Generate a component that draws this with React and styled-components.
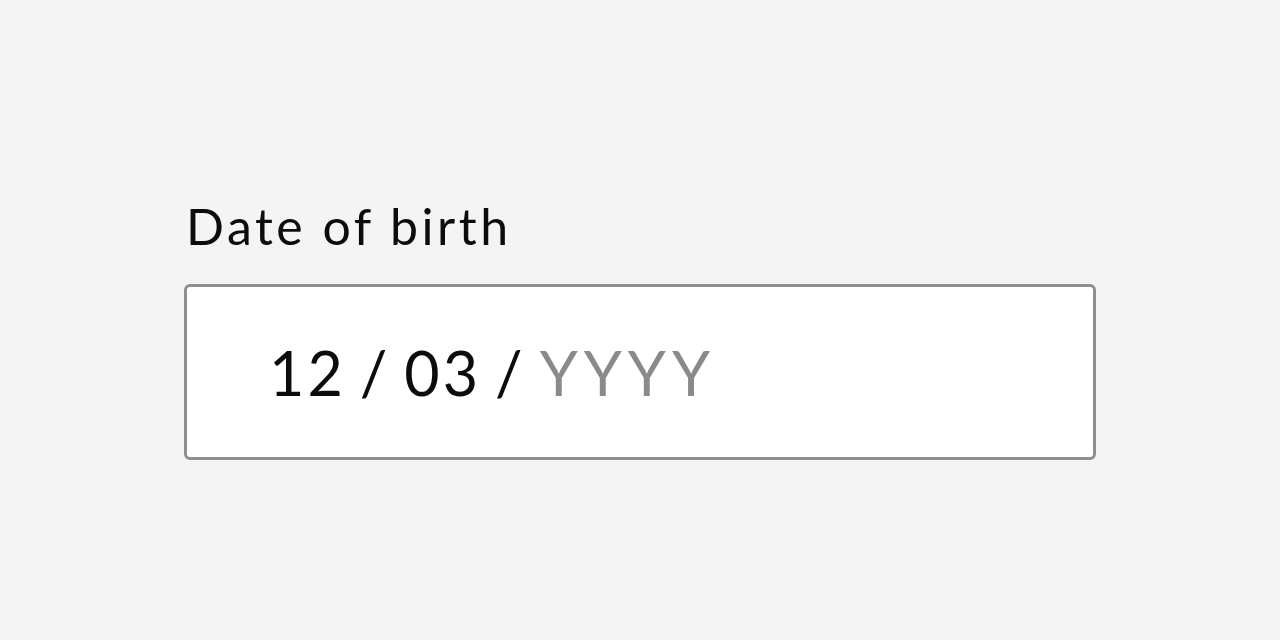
import React from 'react';
import styled, { createGlobalStyle } from 'styled-components';

const GlobalStyle = createGlobalStyle`
    html, body {
        margin: 0;
        padding: 0;
        background: #f4f4f4;
    }
    body {
        font-family: Lato, "Noto Sans", sans-serif;
        color: #0b0c0c;
    }
`;

const Page = styled.div`
    width: 1280px;
    height: 640px;
    box-sizing: border-box;
    padding: 194px 0 0 184px;
`;

const Field = styled.div`
    display: flex;
    flex-direction: column;
    gap: 26px;
    width: 912px;
`;

const Label = styled.label`
    font-size: 50px;
    line-height: 64px;
    letter-spacing: 3.5px;
    padding-left: 2px;
    color: #0b0c0c;
`;

const InputBox = styled.div`
    box-sizing: border-box;
    height: 176px;
    background: #ffffff;
    border: 3px solid #8e8e92;
    border-radius: 6px;
    display: flex;
    align-items: center;
    padding-left: 82px;
    font-size: 61px;
    letter-spacing: 3px;
`;

const Part = styled.span`
    color: ${props => (props.placeholder ? '#8a8a8a' : '#0b0c0c')};
    letter-spacing: ${props => (props.placeholder ? '6px' : '3px')};
`;

const Sep = styled.span`
    margin: 0 14px;
`;

export default function App() {
    return (
        <Page>
            <GlobalStyle />
            <Field>
                <Label>Date of birth</Label>
                <InputBox>
                    <Part>12</Part>
                    <Sep>/</Sep>
                    <Part>03</Part>
                    <Sep>/</Sep>
                    <Part placeholder>YYYY</Part>
                </InputBox>
            </Field>
        </Page>
    );
}
